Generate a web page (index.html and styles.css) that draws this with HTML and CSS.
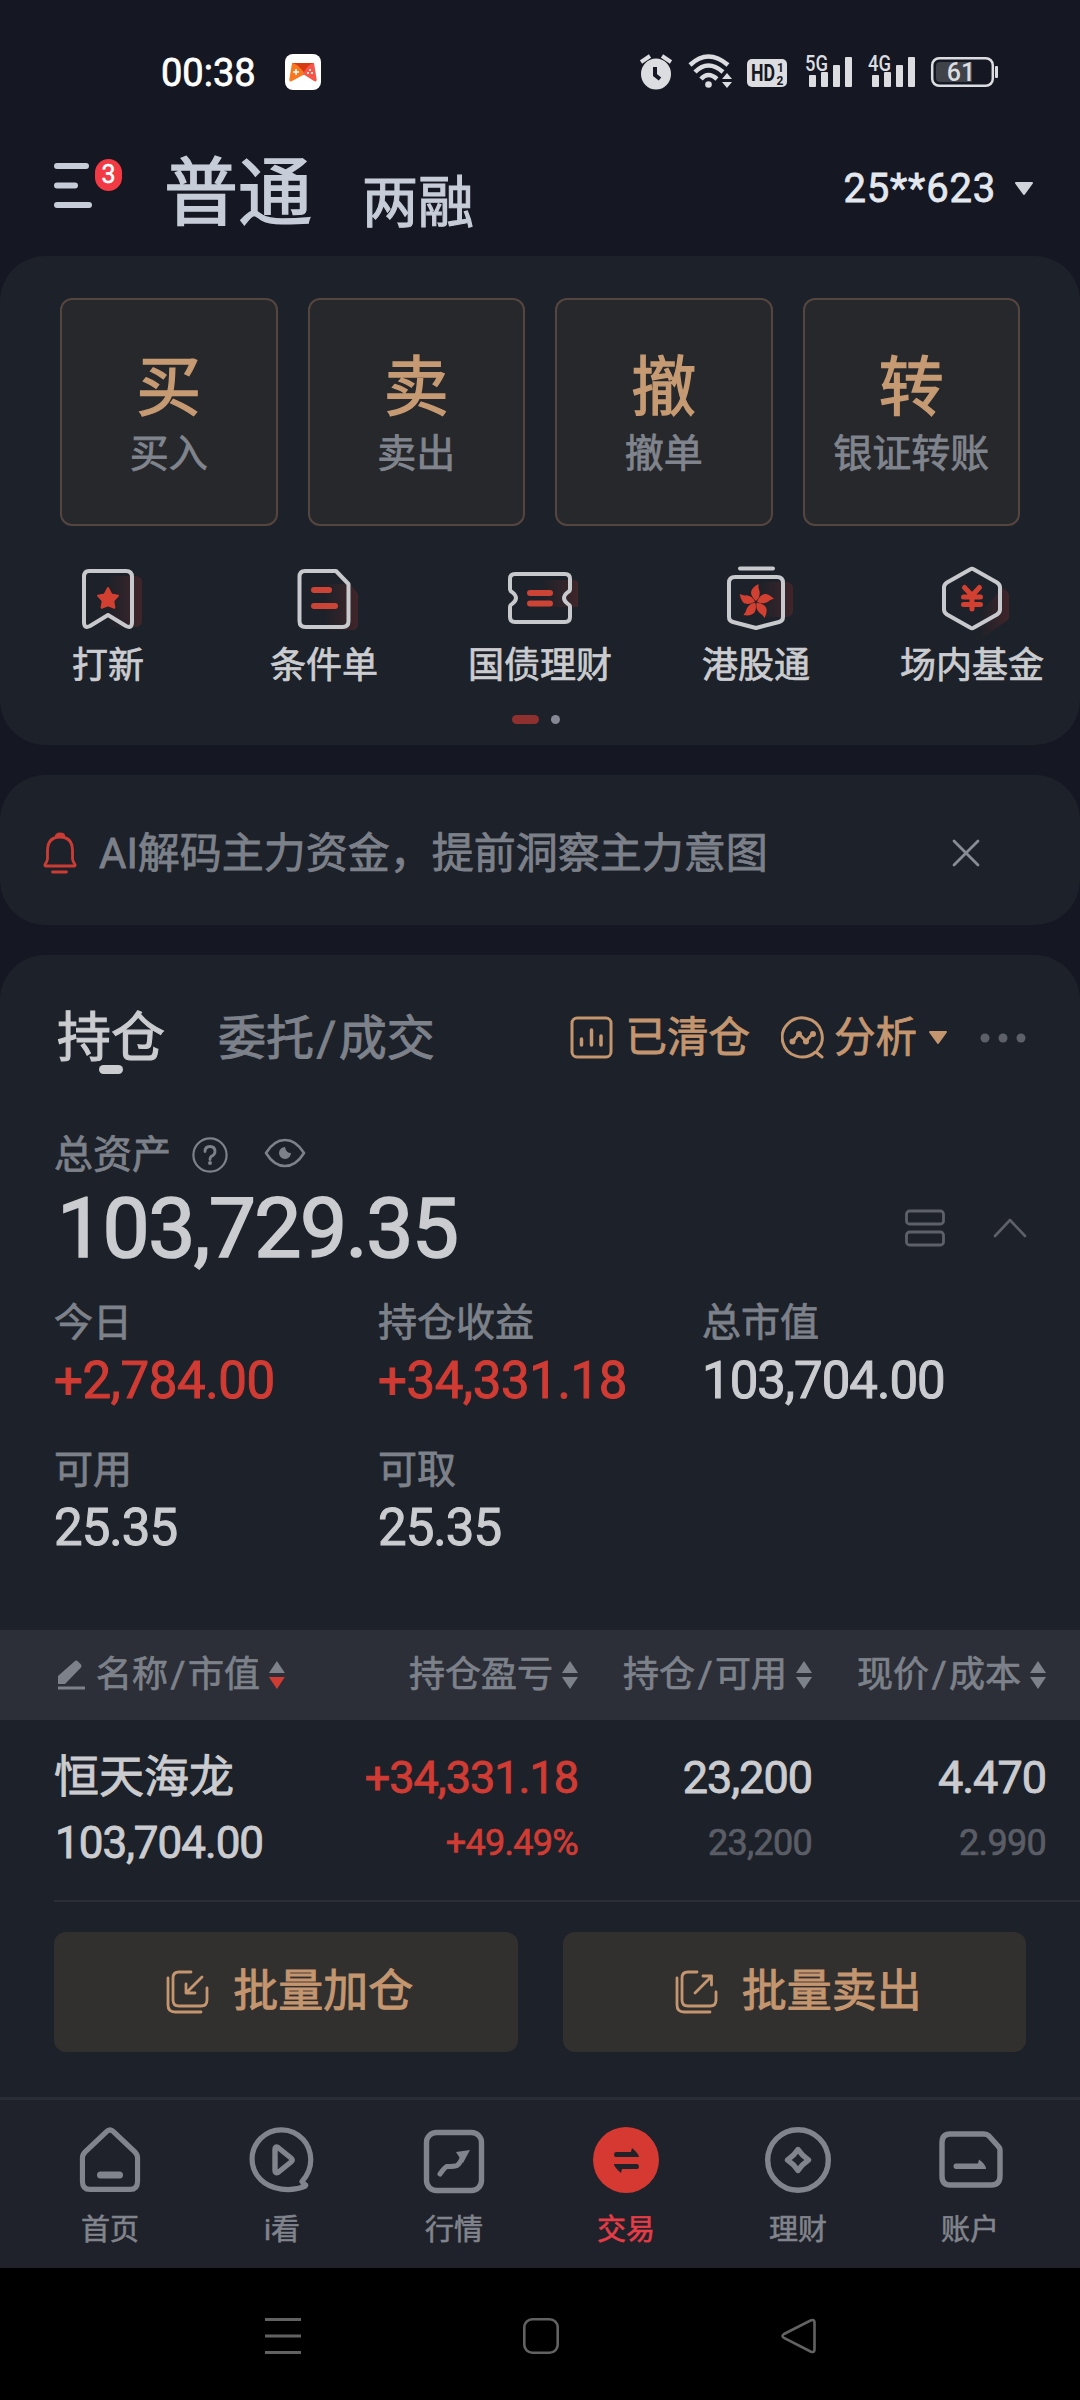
FILE: index.html
```html
<!DOCTYPE html>
<html lang="zh-CN">
<head>
    <meta charset="UTF-8">
    <meta name="viewport" content="width=device-width, initial-scale=1.0">
    <title>交易</title>
    <link rel="stylesheet" href="styles.css">
</head>
<body>

<!-- Phone status bar -->
<div class="status-bar">
    <span class="time">00:38</span>
    <svg class="app-icon" width="36" height="36" viewBox="0 0 36 36">
        <rect width="36" height="36" rx="8" fill="#fff"/>
        <path d="M7 9h22l-11 12z" fill="#d83a12"/>
        <path d="M7 9c5 1 9 5 13 11L7 27c-2 1-3 0-2.600-2z" fill="#f9781f"/>
        <path d="M29 9c-5 1-8 5-11 11l11 7c2 1 3 0 2.600-2z" fill="#f4574a"/>
        <path d="M8 18h6M11 15v6" stroke="#fff" stroke-width="1.500"/>
        <g fill="#fff"><circle cx="25" cy="16" r="1"/><circle cx="23" cy="19" r="1"/><circle cx="27" cy="19" r="1"/></g>
    </svg>
    <div class="status-icons">
        <svg width="358" height="56" viewBox="640 44 358 56">
            <!-- alarm -->
            <g fill="#dcdde0">
                <ellipse cx="656" cy="74" rx="15" ry="15.500"/>
                <path d="M641 62l9-6M671 62l-9-6" stroke="#dcdde0" stroke-width="4"/>
            </g>
            <path d="M655 67v8l5 4" fill="none" stroke="#151722" stroke-width="4"/>
            <!-- wifi -->
            <g fill="none" stroke="#dcdde0" stroke-width="4.500">
                <path d="M690 65q18-17 38 0"/>
                <path d="M695 72q13-13 28 0"/>
                <path d="M701 79q7-8 16 0"/>
            </g>
            <circle cx="708.500" cy="84.500" r="3.300" fill="#dcdde0"/>
            <path d="M722 79l5-6 5 6zM722 82l5 6 5-6z" fill="#dcdde0"/>
            <!-- HD -->
            <rect x="747" y="59" width="40" height="28" rx="5" fill="#dcdde0"/>
            <text class="hd" x="751" y="81" textLength="24" lengthAdjust="spacingAndGlyphs">HD</text>
            <text class="hd-num" x="777" y="72">1</text>
            <text class="hd-num" x="776.500" y="84.500">2</text>
            <!-- 5G / 4G -->
            <text class="net" x="805" y="71" textLength="23" lengthAdjust="spacingAndGlyphs">5G</text>
            <text class="net" x="868" y="71" textLength="23" lengthAdjust="spacingAndGlyphs">4G</text>
            <g fill="#dcdde0">
                <rect x="809" y="75" width="7" height="12" rx="1"/><rect x="821" y="72" width="7" height="15" rx="1"/>
                <rect x="833" y="65" width="7" height="22" rx="1"/><rect x="845" y="57" width="7" height="30" rx="1"/>
                <rect x="872" y="75" width="7" height="12" rx="1"/><rect x="884" y="72" width="7" height="15" rx="1"/>
                <rect x="896" y="65" width="7" height="22" rx="1"/><rect x="908" y="57" width="7" height="30" rx="1"/>
            </g>
            <!-- battery -->
            <rect x="932.200" y="58.200" width="60.600" height="27.600" rx="7" fill="none" stroke="#dcdde0" stroke-width="2.500"/>
            <path d="M940 62h32v20h-32q-4 0-4-4v-12q0-4 4-4z" fill="#41434b"/>
            <rect x="995" y="66" width="3" height="12" rx="1" fill="#dcdde0"/>
            <text class="battery" x="961" y="81">61</text>
        </svg>
    </div>
</div>

<!-- Account header -->
<header class="header">
    <div class="menu">
        <svg width="40" height="46" viewBox="0 0 40 46" stroke="#c6ccd8" stroke-width="6" stroke-linecap="round">
            <path d="M3 3h29M3 22.500h18M3 42h32"/>
        </svg>
        <span class="badge">3</span>
    </div>
    <h1>普通</h1>
    <h2>两融</h2>
    <div class="account">
        <span>25**623</span>
        <svg width="20" height="14" viewBox="0 0 20 14"><path d="M2 1h16l-8 11z" fill="#d0d3da" stroke="#d0d3da" stroke-width="2" stroke-linejoin="round"/></svg>
    </div>
</header>

<!-- Trade actions -->
<section class="card trade">
    <div class="actions">
        <div class="action"><b>买</b><span>买入</span></div>
        <div class="action"><b>卖</b><span>卖出</span></div>
        <div class="action"><b>撤</b><span>撤单</span></div>
        <div class="action"><b>转</b><span>银证转账</span></div>
    </div>
    <div class="shortcuts">
        <svg width="0" height="0" class="defs">
            <defs>
                <linearGradient id="shade" x1="0.3" x2="1"><stop offset="0" stop-color="#c8372f" stop-opacity="0"/><stop offset="1" stop-color="#c8372f" stop-opacity=".2"/></linearGradient>
            </defs>
        </svg>
        <div class="shortcut">
            <svg width="76" height="76" viewBox="-2 0 76 76">
                <rect x="20" y="12" width="50" height="51" rx="6" fill="url(#shade)"/>
                <path class="line" d="M17 7h37q6 0 6 6v45q0 7-6 4l-18-11-18 11q-6 3-6-4v-45q0-6 5-6z"/>
                <path d="M36 24l3.400 6.500 6.600 1.200-4.700 5.200 1.100 6.800-6.400-2.300-6.400 2.300 1.100-6.800-4.700-5.200 6.600-1.200z" fill="#d24032" stroke="#d24032" stroke-width="2" stroke-linejoin="round"/>
            </svg>
            <span>打新</span>
        </div>
        <div class="shortcut">
            <svg width="76" height="76" viewBox="-2 0 76 76">
                <path d="M20 20h42l8 10v30q0 6-6 6h-44z" fill="url(#shade)"/>
                <path class="line" d="M17 7h31l12.500 13v37q0 6-6 6h-37q-6 0-6-6v-44q0-6 5.500-6z"/>
                <path class="red-line" d="M26 26h15M26 42h21"/>
            </svg>
            <span>条件单</span>
        </div>
        <div class="shortcut">
            <svg width="76" height="76" viewBox="-2 0 76 76">
                <path d="M20 16h49q6 0 6 6v21h-50z" fill="url(#shade)"/>
                <path class="line" d="M11 10h50q5 0 5 5v10q0 2-2 3-8 6 0 12 2 1 2 3v10q0 5-5 5h-50q-5 0-5-5v-10q0-2 2-3 8-6 0-12-2-1-2-3v-10q0-5 5-5z"/>
                <path class="red-line" d="M26 29h20M26 39.500h20"/>
            </svg>
            <span>国债理财</span>
        </div>
        <div class="shortcut">
            <svg width="76" height="76" viewBox="-2 0 76 76">
                <rect x="24" y="18" width="49" height="35" rx="6" fill="url(#shade)"/>
                <path class="line" d="M20 4.500h33M15 13h42q6 0 6 6v34q0 4-4 5l-23 6-23-6q-4-1-4-5v-34q0-6 6-6z"/>
                <g fill="#d24032">
                    <path d="M36 37q-11-10 2.500-17-.5 4 1 7 1 6-3.500 10z"/>
                    <path transform="rotate(72 36 38)" d="M36 37q-11-10 2.500-17-.5 4 1 7 1 6-3.500 10z"/>
                    <path transform="rotate(144 36 38)" d="M36 37q-11-10 2.500-17-.5 4 1 7 1 6-3.500 10z"/>
                    <path transform="rotate(216 36 38)" d="M36 37q-11-10 2.500-17-.5 4 1 7 1 6-3.500 10z"/>
                    <path transform="rotate(288 36 38)" d="M36 37q-11-10 2.500-17-.5 4 1 7 1 6-3.500 10z"/>
                </g>
            </svg>
            <span>港股通</span>
        </div>
        <div class="shortcut">
            <svg width="76" height="76" viewBox="-2 0 76 76">
                <path d="M66 24q7 3 7 8v20q0 4-4 6l-22 15q-4 1-8-2l-9-5z" fill="url(#shade)"/>
                <path class="line" d="M34 5.500q2-1.500 4 0l23 13q3 2 3 5v22q0 3-3 5l-23 13q-2 1.500-4 0l-23-13q-3-2-3-5v-22q0-3 3-5z"/>
                <path d="M28.500 23.500l7.500 8 7.500-8M27.500 33h17M27.500 40.500h17M36 32v13" fill="none" stroke="#d24032" stroke-width="5" stroke-linecap="round"/>
            </svg>
            <span>场内基金</span>
        </div>
    </div>
    <div class="pager"><i class="on"></i><i></i></div>
</section>

<!-- Notice -->
<section class="card notice">
    <svg width="34" height="42" viewBox="0 0 34 42" fill="none" stroke="#cb3c35" stroke-width="2.800" stroke-linejoin="round" stroke-linecap="round">
        <path d="M13 5q0-3 4-3t4 3M17 5q12 0 12.500 13v9q.5 3 2.500 5.500.500 1.500-1 1.500h-28q-1.500 0-1-1.500 2-2.500 2.500-5.500v-9q.5-13 12.500-13zM9.500 40h14"/>
    </svg>
    <p>AI解码主力资金，提前洞察主力意图</p>
    <svg width="28" height="28" viewBox="0 0 28 28" stroke="#888c94" stroke-width="2.800" stroke-linecap="round"><path d="M2 2l24 24M26 2L2 26"/></svg>
</section>

<!-- Holdings -->
<section class="card holdings">
    <div class="tabs">
        <span class="tab active">持仓</span>
        <span class="tab">委托<span class="slash">/</span>成交</span>
        <div class="tools">
            <svg width="43" height="43" viewBox="0 0 43 43" fill="none" stroke="#c3966f" stroke-width="3" stroke-linecap="round">
                <rect x="2" y="2" width="39" height="39" rx="5"/>
                <path d="M11.500 23v6M21.500 14v15M31 20v9" stroke-width="3.500"/>
            </svg>
            <span class="cleared">已清仓</span>
            <svg width="44" height="43" viewBox="0 0 44 43" fill="none" stroke="#c3966f" stroke-width="3" stroke-linecap="round">
                <path d="M34.500 36a20 19.500 0 1 1 2-2M35 36l6 5"/>
                <path d="M12 25l6-7 7 7 6.500-7"/>
                <g fill="#c3966f" stroke="none"><circle cx="11.500" cy="25.500" r="3"/><circle cx="18" cy="18" r="3"/><circle cx="25" cy="25.500" r="3"/><circle cx="32" cy="18" r="3"/></g>
            </svg>
            <span class="analysis">分析</span>
            <svg width="20" height="14" viewBox="0 0 20 14"><path d="M2 1h16l-8 11z" fill="#c3966f" stroke="#c3966f" stroke-width="2" stroke-linejoin="round"/></svg>
            <svg class="more" width="46" height="10" viewBox="0 0 46 10" fill="#5d6068"><circle cx="5" cy="5" r="4.500"/><circle cx="23" cy="5" r="4.500"/><circle cx="41" cy="5" r="4.500"/></svg>
        </div>
    </div>

    <div class="asset-label">
        <span>总资产</span>
        <svg width="36" height="36" viewBox="0 0 36 36" fill="none" stroke="#7d818a" stroke-width="2.200">
            <circle cx="18" cy="18" r="16.600"/>
            <path d="M13 14.500q0-5 5-5t5 5q0 3-3 4.500-2 1-2 3.500" stroke-width="2.800" stroke-linecap="round"/>
            <circle cx="18" cy="26" r="2" fill="#7d818a" stroke="none"/>
        </svg>
        <svg class="eye" width="42" height="30" viewBox="0 0 42 30" fill="none" stroke="#7d818a" stroke-width="2.600">
            <path d="M2 15Q10 2 21 2T40 15Q32 28 21 28T2 15z" stroke-linejoin="round"/>
            <path d="M21 9a6 6 0 1 0 6 6q-5 0-6-6z" fill="#7d818a" stroke="none"/>
        </svg>
    </div>
    <div class="asset-total">
        <strong>103,729.35</strong>
        <svg width="40" height="38" viewBox="0 0 40 38" fill="none" stroke="#5d6068" stroke-width="2.800"><rect x="1.500" y="2" width="37" height="13" rx="3"/><rect x="1.500" y="23" width="37" height="13" rx="3"/></svg>
        <svg width="34" height="20" viewBox="0 0 34 20" fill="none" stroke="#5d6068" stroke-width="2.600" stroke-linecap="round" stroke-linejoin="round"><path d="M2 18l15-16 15 16"/></svg>
    </div>

    <div class="metrics">
        <div><span>今日</span><em class="up">+2,784.00</em></div>
        <div><span>持仓收益</span><em class="up">+34,331.18</em></div>
        <div><span>总市值</span><em>103,704.00</em></div>
        <div><span>可用</span><em>25.35</em></div>
        <div><span>可取</span><em>25.35</em></div>
    </div>

    <div class="row table-head">
        <div class="cell">
            <svg class="edit" width="29" height="32" viewBox="0 0 29 32" fill="#7d818a"><path d="M1 25v-8l17-15q1.500-1 3 .5l3 3q1 1.500 0 3L8 25zM1 27.500h27v3h-27z"/></svg>
            名称<span class="slash">/</span>市值<i class="sort desc"></i>
        </div>
        <div class="cell">持仓盈亏<i class="sort"></i></div>
        <div class="cell">持仓<span class="slash">/</span>可用<i class="sort"></i></div>
        <div class="cell">现价<span class="slash">/</span>成本<i class="sort"></i></div>
    </div>
    <div class="row stock">
        <div class="cell"><b class="name">恒天海龙</b><span class="value">103,704.00</span></div>
        <div class="cell up"><b>+34,331.18</b><span>+49.49%</span></div>
        <div class="cell"><b>23,200</b><span>23,200</span></div>
        <div class="cell"><b>4.470</b><span>2.990</span></div>
    </div>

    <div class="batch">
        <div class="batch-button">
            <svg width="43" height="44" viewBox="0 0 43 44" fill="none" stroke="#c3966f" stroke-width="2.800" stroke-linecap="round" stroke-linejoin="round">
                <path d="M25 2h-12q-6 0-6 6v22q0 6 6 6h22q6 0 6-6v-12M2 8v27q0 7 7 7h26M36 7L20 23M20 14v9h9"/>
            </svg>
            <span>批量加仓</span>
        </div>
        <div class="batch-button">
            <svg width="43" height="44" viewBox="0 0 43 44" fill="none" stroke="#c3966f" stroke-width="2.800" stroke-linecap="round" stroke-linejoin="round">
                <path d="M22 2h-9q-6 0-6 6v22q0 6 6 6h22q6 0 6-6v-8M2 8v27q0 7 7 7h26M20 23L36 7M28 6h8.500v9"/>
            </svg>
            <span>批量卖出</span>
        </div>
    </div>
</section>

<!-- Bottom tab bar -->
<nav class="tab-bar">
    <div class="item">
        <svg width="68" height="68" viewBox="0 0 68 68">
            <path class="shape" d="M30 5q4-4 8 0l22 20q3 3 3 6v24q0 8-8 8h-42q-8 0-8-8v-24q0-3 3-6z" transform="translate(1.700 1) scale(.95 .99)"/>
            <path class="thick" d="M24.500 49h19"/>
        </svg>
        <span>首页</span>
    </div>
    <div class="item">
        <svg width="68" height="68" viewBox="0 0 68 68">
            <path class="shape" d="M55 57c13-14 11-33 1-44C44 0 24 0 12 12S0 43 12 55c11 11 31 13 46 7q2-1 0-2-3-1-2-4z" transform="translate(1.200 .8) scale(.96)"/>
            <path class="shape" d="M27 23q0-3 3-1.500l13 10.500q2.500 2 0 4l-13 10.500q-3 1-3-2z"/>
        </svg>
        <span>i看</span>
    </div>
    <div class="item">
        <svg width="68" height="68" viewBox="0 0 68 68">
            <rect class="shape" x="6.500" y="6.500" width="55" height="58" rx="10"/>
            <path d="M20 48q5-7 7-7.500 8 0 10-1 3-2 6-9" fill="none" stroke="#81848c" stroke-width="5" stroke-linecap="round"/>
            <path d="M36 26l14-2-7 13z" fill="#81848c"/>
        </svg>
        <span>行情</span>
    </div>
    <div class="item active">
        <svg width="68" height="68" viewBox="0 0 68 68">
            <circle cx="34" cy="34" r="33" fill="#d53932"/>
            <path d="M24 26h15l1-4q7 6 7 9h-23q-2 0-2-2.500t2-2.500zM22 38h23q2 0 2 2.500t-2 2.500h-15l-1 4q-7-6-7-9z" fill="#22222a"/>
        </svg>
        <span>交易</span>
    </div>
    <div class="item">
        <svg width="68" height="68" viewBox="0 0 68 68">
            <circle class="shape" cx="34" cy="34" r="30.300"/>
            <path class="shape" d="M34 23.500q4.200 6.300 10.500 10.500-6.300 4.200-10.500 10.500-4.200-6.300-10.500-10.500 6.300-4.200 10.500-10.500z"/>
        </svg>
        <span>理财</span>
    </div>
    <div class="item">
        <svg width="68" height="68" viewBox="0 0 68 68">
            <path class="shape" d="M14 8h34q3 0 5 2l9 10q2 2 2 4v26q0 9-9 9h-41q-8 0-8-9v-33q0-9 8-9z"/>
            <path d="M20 37.500h22l1-4q7 5 7 9.500h-30q-2.500 0-2.500-2.700t2.500-2.800z" fill="#81848c"/>
        </svg>
        <span>账户</span>
    </div>
</nav>

<!-- System navigation -->
<div class="system-nav">
    <svg width="36" height="36" viewBox="0 0 36 36" stroke="#626262" stroke-width="3"><path d="M0 1.500h36M0 18h36M0 34.500h36"/></svg>
    <svg width="36" height="36" viewBox="0 0 36 36" fill="none" stroke="#626262" stroke-width="2.600"><rect x="1.300" y="1.300" width="33.400" height="33.400" rx="8"/></svg>
    <svg width="36" height="36" viewBox="0 0 36 36" fill="none" stroke="#626262" stroke-width="2.600"><path d="M3 16L29.500 2.500q4-1.500 4 2v27q0 3.500-4 2L3 20q-3-2 0-4z"/></svg>
</div>

</body>
</html>
```

FILE: styles.css
```css
* {
    box-sizing: border-box;
    -webkit-text-stroke-width: 0.02em;
}
body {
    margin: 0;
    width: 1080px;
    height: 2400px;
    display: flex;
    flex-direction: column;
    overflow: hidden;
    background: #151722;
    color: #cbccd0;
    font-family: Roboto, "Noto Sans CJK SC", sans-serif;
    font-weight: 400;
}
svg {
    display: block;
    flex: none;
}
h1, h2, p {
    margin: 0;
    font-weight: 400;
}
b, strong, em, i {
    font-weight: 400;
    font-style: normal;
}
span, b, em {
    white-space: nowrap;
}

/* Status bar */
.status-bar {
    height: 144px;
    padding: 0 82px 0 161px;
    display: flex;
    align-items: center;
}
.time {
    width: 124px;
    padding-top: 2px;
    color: #fff;
    font-size: 38px;
    line-height: 44px;
}
.status-icons {
    margin-left: auto;
}
.status-icons text {
    -webkit-text-stroke-width: 0;
}
.hd {
    font-size: 23px;
    font-weight: 700;
    fill: #151722;
}
.hd-num {
    font-size: 12px;
    font-weight: 700;
    fill: #151722;
}
.net {
    font-size: 22px;
    font-weight: 500;
    fill: #dcdde0;
}
.battery {
    font-size: 25px;
    font-weight: 500;
    text-anchor: middle;
    fill: #dcdde0;
}

/* Header */
.header {
    height: 112px;
    padding: 0 46px 0 54px;
    display: flex;
    align-items: flex-start;
    color: #c6ccd8;
}
.menu {
    position: relative;
    width: 110px;
    padding-top: 19px;
}
.badge {
    position: absolute;
    left: 41px;
    top: 15px;
    width: 27px;
    height: 32px;
    border-radius: 14px;
    background: #f23a45;
    color: #fff;
    font-size: 25px;
    line-height: 32px;
    text-align: center;
}
.header h1 {
    width: 198px;
    font-size: 74px;
    line-height: 100px;
}
.header h2 {
    padding-top: 22px;
    font-size: 56px;
    line-height: 74px;
}
.account {
    margin: 23px 0 0 auto;
    display: flex;
    align-items: center;
    gap: 18px;
    color: #e3e7ee;
    font-size: 40px;
    line-height: 44px;
    letter-spacing: 0.8px;
}

/* Cards */
.card {
    flex: none;
    background: #1d2129;
    border-radius: 45px;
}
.trade {
    height: 489px;
    padding-top: 42px;
}
.actions {
    display: grid;
    grid-template-columns: repeat(4, 1fr);
    gap: 30px;
    padding: 0 60px;
}
.action {
    height: 228px;
    padding-top: 48px;
    border: 2px solid #54463f;
    border-radius: 12px;
    background: #27282c;
    display: flex;
    flex-direction: column;
    align-items: center;
}
.action b {
    color: #c69a72;
    font-size: 65px;
    line-height: 80px;
}
.action span {
    margin-top: -2px;
    color: #80848d;
    font-size: 39px;
    line-height: 56px;
}
.shortcuts {
    display: flex;
    padding-top: 38px;
}
.defs {
    position: absolute;
}
.shortcut {
    width: 216px;
    display: flex;
    flex-direction: column;
    align-items: center;
}
.shortcut span {
    font-size: 36px;
    line-height: 52px;
}
.line {
    fill: none;
    stroke: #c8c9cd;
    stroke-width: 4;
    stroke-linejoin: round;
    stroke-linecap: round;
}
.red-line {
    fill: none;
    stroke: #cc4436;
    stroke-width: 6;
    stroke-linecap: round;
}
.pager {
    display: flex;
    justify-content: center;
    gap: 12px;
    margin-top: 23px;
    padding-right: 8px;
}
.pager i {
    width: 9px;
    height: 9px;
    border-radius: 5px;
    background: #868995;
}
.pager .on {
    width: 27px;
    background: #8e302e;
}

/* Notice */
.notice {
    height: 150px;
    margin-top: 30px;
    padding: 5px 100px 0 43px;
    display: flex;
    align-items: center;
}
.notice p {
    flex: 1;
    padding: 2px 0 0 22px;
    color: #7c8089;
    font-size: 42px;
    line-height: 60px;
}

/* Holdings */
.holdings {
    flex: 1;
    margin-top: 30px;
    border-radius: 45px 45px 0 0;
}
.tabs {
    height: 165px;
    padding: 0 54px 0 57px;
    display: flex;
    align-items: center;
}
.tab {
    padding-top: 2px;
    color: #7d818a;
    font-size: 48px;
    line-height: 66px;
}
.slash {
    margin: 0 2.5px;
}
.tab.active {
    position: relative;
    width: 161px;
    color: #cbccd0;
    font-size: 54px;
}
.tab.active::after {
    content: "";
    position: absolute;
    left: 42px;
    bottom: -2px;
    width: 24px;
    height: 9px;
    border-radius: 5px;
    background: #cbccd0;
}
.tools {
    margin-left: auto;
    display: flex;
    align-items: center;
    color: #c3966f;
    font-size: 41.5px;
    line-height: 60px;
}
.tools span {
    padding-top: 1px;
}
.cleared {
    margin: 0 31px 0 12px;
}
.analysis {
    margin: 0 11px 0 9px;
}
.more {
    margin-left: 32px;
}
.asset-label {
    height: 70px;
    padding-left: 54px;
    display: flex;
    align-items: center;
    color: #7d818a;
    font-size: 39px;
    line-height: 56px;
}
.asset-label svg {
    margin-left: 21px;
}
.asset-label .eye {
    margin: -4px 0 0 36px;
}
.asset-total {
    height: 76px;
    padding: 0 53px 0 57px;
    display: flex;
    align-items: center;
    gap: 48px;
}
.asset-total strong {
    flex: 1;
    padding-top: 1px;
    font-size: 84px;
    line-height: 76px;
    letter-spacing: -1.6px;
}
.metrics {
    height: 364px;
    padding: 29px 0 0 54px;
    display: grid;
    grid-template-columns: repeat(3, 324px);
    grid-auto-rows: 147px;
}
.metrics div {
    display: flex;
    flex-direction: column;
}
.metrics span {
    color: #7d818a;
    font-size: 39px;
    line-height: 56px;
}
.metrics em {
    font-size: 51px;
    line-height: 60px;
    letter-spacing: -1px;
}
.metrics .up {
    letter-spacing: -0.4px;
}
.up, .metrics .up {
    color: #d03b34;
}

/* Positions table */
.row {
    display: grid;
    grid-template-columns: 264px 260px 234px 234px;
    padding-left: 54px;
}
.table-head {
    height: 90px;
    align-items: center;
    background: #2c2f37;
    color: #7d818a;
    font-size: 36px;
    line-height: 50px;
}
.table-head .cell {
    display: flex;
    align-items: center;
    justify-content: flex-end;
    white-space: nowrap;
}
.table-head .cell:first-child {
    justify-content: flex-start;
}
.edit {
    margin: 0 10px 0 3px;
}
.sort {
    width: 16px;
    height: 28px;
    margin-left: 9px;
    display: flex;
    flex-direction: column;
    justify-content: space-between;
}
.sort::before, .sort::after {
    content: "";
    height: 12px;
    background: #7d818a;
    clip-path: polygon(50% 0, 100% 100%, 0 100%);
}
.sort::after {
    clip-path: polygon(0 0, 100% 0, 50% 100%);
}
.sort.desc::after {
    background: #d03b34;
}
.stock {
    height: 182px;
    margin-left: 54px;
    padding: 28px 0 0 0;
    border-bottom: 2px solid #2b2e36;
}
.stock .cell {
    display: flex;
    flex-direction: column;
    align-items: flex-end;
}
.stock .cell:first-child {
    align-items: flex-start;
}
.stock b {
    font-size: 45px;
    line-height: 60px;
    letter-spacing: -1px;
}
.stock .name {
    letter-spacing: 0;
}
.stock span {
    padding-top: 5px;
    color: #5a5d65;
    font-size: 36px;
    line-height: 60px;
    letter-spacing: -0.7px;
}
.stock .value {
    padding-left: 1px;
    color: #cbccd0;
    font-size: 44px;
    letter-spacing: -1px;
}
.stock .up span {
    color: #d03b34;
}

/* Batch buttons */
.batch {
    display: grid;
    grid-template-columns: 1fr 1fr;
    gap: 45px;
    padding: 30px 54px 0;
}
.batch-button {
    height: 120px;
    padding-left: 8px;
    border-radius: 12px;
    background: #322f2f;
    display: flex;
    align-items: center;
    justify-content: center;
    gap: 24px;
    color: #c3966f;
    font-size: 45px;
    line-height: 60px;
}

/* Tab bar */
.tab-bar {
    flex: none;
    height: 171px;
    padding: 26px 24px 0;
    display: flex;
    border-top: 3px solid #2a2d34;
    background: #1f222a;
}
.item {
    width: 172px;
    display: flex;
    flex-direction: column;
    align-items: center;
    color: #81848c;
    font-size: 29px;
    line-height: 40px;
}
.item span {
    margin-top: 16px;
}
.item.active {
    color: #e63c47;
}
.shape {
    fill: none;
    stroke: #81848c;
    stroke-width: 5.4;
    stroke-linejoin: round;
}
.thick {
    stroke: #81848c;
    stroke-width: 7;
    stroke-linecap: round;
}

/* System navigation */
.system-nav {
    flex: none;
    height: 132px;
    padding: 3px 0 0 2px;
    display: flex;
    align-items: center;
    justify-content: center;
    gap: 222px;
    background: #000;
}
```
